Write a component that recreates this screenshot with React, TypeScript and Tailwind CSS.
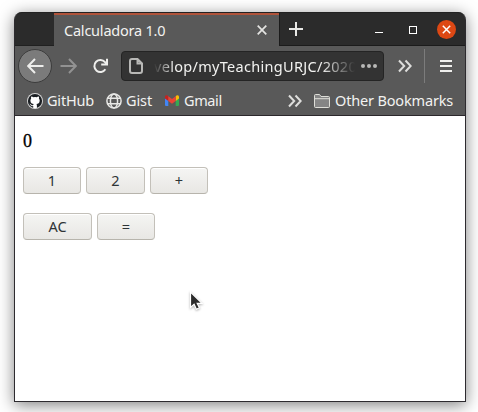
import type { ReactNode } from "react";

function Chevrons() {
  return (
    <svg width="14" height="14" viewBox="0 0 14 14" fill="none" stroke="#dededc" strokeWidth="2" className="shrink-0">
      <path d="M1 1.5 6.2 7 1 12.5M7.5 1.5 12.7 7 7.5 12.5" />
    </svg>
  );
}

function CalcButton({ children, className }: { children: ReactNode; className: string }) {
  return (
    <button
      className={
        "h-[27px] rounded-[4px] border border-[#c3c0b9] border-b-[#b7b4ac] bg-linear-to-b from-[#f5f5f3] to-[#e8e7e4] text-center text-[14.5px] leading-[25px] text-[#2e3436] shadow-[inset_0_1px_0_#fff] " +
        className
      }
    >
      {children}
    </button>
  );
}

function TabStrip() {
  return (
    <div className="flex h-[34px] rounded-t-[7px] border-t border-[#222] bg-[#2b2b2b]">
      <div className="w-[39px] border-b border-[#202020]" />
      <div className="flex w-[225px] items-center justify-between border-t-2 border-[#b0533a] bg-[#595959] pr-3 pl-[10px]">
        <span className="-mt-[2px] text-[14.5px] leading-5 tracking-[-0.22px] whitespace-nowrap">Calculadora 1.0</span>
        <svg width="10" height="10" viewBox="0 0 10 10" stroke="#e4e4e2" strokeWidth="1.7" className="-mt-[2px]">
          <path d="m.7.7 8.6 8.6m0-8.6L.7 9.3" />
        </svg>
      </div>
      <div className="flex flex-1 items-center border-b border-l border-[#1b1b1b] pr-[9px] pl-[9px]">
        <svg width="14" height="14" viewBox="0 0 14 14" stroke="#e8e8e6" strokeWidth="2">
          <path d="M7 0v14M0 7h14" />
        </svg>
        <div className="mt-[7px] ml-[72px] h-px w-2 bg-white" />
        <div className="mt-[2px] ml-[26px] h-2 w-2 border border-white" />
        <div className="ml-auto flex h-[19px] w-[19px] items-center justify-center rounded-full bg-[#dd4814]">
          <svg width="9" height="9" viewBox="0 0 9 9" stroke="#fff" strokeWidth="1.5">
            <path d="m.8.8 7.4 7.4m0-7.4L.8 8.2" />
          </svg>
        </div>
      </div>
    </div>
  );
}

function Toolbar() {
  return (
    <div className="flex h-10 items-center">
      <div className="ml-[3px] flex h-[34px] w-[34px] items-center justify-center rounded-full border border-[#3c3c3c] bg-[#7b7b7b]">
        <svg width="17" height="16" viewBox="0 0 17 16" fill="none" stroke="#eeeeec" strokeWidth="2">
          <path d="M16.5 8H2M8 1 1.2 8 8 15" />
        </svg>
      </div>
      <svg width="17" height="16" viewBox="0 0 17 16" fill="none" stroke="#929292" strokeWidth="2" className="ml-[8px]">
        <path d="M.5 8H15M9 1l6.8 7L9 15" />
      </svg>
      <svg width="16" height="16" viewBox="0 0 16 16" fill="none" stroke="#eeeeec" strokeWidth="2" className="ml-[15px]">
        <path d="M13.4 11.3A6 6 0 1 1 13 4.2L14.5 6" />
        <path d="M15 .7v5.8H9.2" />
      </svg>
      <div className="ml-[13px] flex h-[30px] w-[263px] items-center rounded-[4px] border border-[#242424] bg-[#333] pl-[7px]">
        <svg width="14" height="16" viewBox="0 0 14 16" fill="none" stroke="#b8b8b6" strokeWidth="2" className="shrink-0">
          <path d="M8.5 1H3a2 2 0 0 0-2 2v10a2 2 0 0 0 2 2h8a2 2 0 0 0 2-2V5.5L8.5 1v4.5H13" />
        </svg>
        <div className="ml-[11px] flex w-[201px] overflow-hidden mask-[linear-gradient(to_right,transparent,black_20px,black_168px,transparent_201px)]">
          <span className="text-[14.5px] leading-6 tracking-[0.3px] whitespace-nowrap">velop/myTeachingURJC/2020</span>
        </div>
        <div className="ml-[6px] flex gap-[2px]">
          <i className="h-1 w-1 rounded-full bg-[#b8b8b6]" />
          <i className="h-1 w-1 rounded-full bg-[#b8b8b6]" />
          <i className="h-1 w-1 rounded-full bg-[#b8b8b6]" />
        </div>
      </div>
      <div className="ml-[14px]">
        <Chevrons />
      </div>
      <div className="ml-3 h-[34px] w-px bg-[#7c7c7c]" />
      <svg width="12" height="12" viewBox="0 0 12 12" stroke="#eeeeec" strokeWidth="2" className="ml-[15px]">
        <path d="M0 1h12M0 6h12M0 11h12" />
      </svg>
    </div>
  );
}

function Bookmarks() {
  return (
    <div className="flex h-[30px] items-center border-b border-[#2b272b] pl-3 text-[14.5px] leading-5 whitespace-nowrap">
      <svg width="16" height="16" viewBox="0 0 16 16" className="shrink-0">
        <circle cx="8" cy="8" r="8" fill="#d8d8d8" />
        <circle cx="8" cy="8" r="7.1" fill="#1b1f23" />
        <path
          fill="#fff"
          d="M5.7 14.8c.4.1.5-.2.5-.4v-1.3c-2 .4-2.5-.9-2.5-.9-.3-.8-.8-1-.8-1-.7-.5 0-.5 0-.5.8.1 1.2.8 1.2.8.7 1.1 1.7.8 2.1.6 0-.5.3-.8.5-1-1.6-.2-3.3-.8-3.3-3.5 0-.8.3-1.5.8-2-.1-.2-.4-1 .1-2 0 0 .6-.2 2 .7a7 7 0 0 1 3.6 0c1.4-.9 2-.7 2-.7.4 1 .1 1.8 0 2 .5.5.8 1.2.8 2 0 2.7-1.7 3.3-3.3 3.5.3.2.5.7.5 1.3v2c0 .2.1.5.5.4A7.2 7.2 0 0 1 5.7 14.8Z"
        />
      </svg>
      <span className="-mt-[2px] ml-[4px] w-[47px] tracking-[-0.2px]">GitHub</span>
      <svg width="16" height="16" viewBox="0 0 16 16" fill="none" stroke="#e8e8e6" strokeWidth="1.5" className="ml-[12px] shrink-0">
        <circle cx="8" cy="8" r="7.1" />
        <ellipse cx="8" cy="8" rx="3.6" ry="7.1" />
        <path d="M1.6 5.2h12.8M1.6 10.8h12.8" />
      </svg>
      <span className="-mt-[2px] ml-[4px] w-[26px] tracking-[-0.1px]">Gist</span>
      <svg width="14" height="11" viewBox="0 0 14 11" className="ml-[13px] shrink-0">
        <path fill="#4285f4" d="M0 3v7q0 1 1 1h2.3V5z" />
        <path fill="#34a853" d="M10.7 5v6H13q1 0 1-1V3z" />
        <path fill="#c5221f" d="M0 1.5v2L3.3 6V1.2L2.5.5Q.8-.5 0 1.5" />
        <path fill="#fbbc04" d="M14 1.5v2L10.7 6V1.2l.8-.7Q13.2-.5 14 1.5" />
        <path fill="#ea4335" d="M3.3 1.2 7 4l3.7-2.8V6L7 8.8 3.3 6z" />
      </svg>
      <span className="-mt-[2px] ml-[5px] w-[38px] tracking-[-0.4px]">Gmail</span>
      <div className="ml-[66px]">
        <Chevrons />
      </div>
      <svg width="16" height="14" viewBox="0 0 16 14" fill="#858585" stroke="#deded8" className="ml-3 shrink-0">
        <path d="M.5 12.5V1.5q0-1 1-1h4l1.5 2h7.5q1 0 1 1v9q0 1-1 1h-13q-1 0-1-1ZM.5 4.7h15" />
      </svg>
      <span className="-mt-[2px] ml-[5px] tracking-[-0.16px]">Other Bookmarks</span>
    </div>
  );
}

export default function App() {
  return (
    <div className="relative h-[412px] w-[478px] overflow-hidden bg-white pt-3 pl-[14px] font-['Noto_Sans',sans-serif]">
      <div className="h-[390px] w-[452px] rounded-t-[8px] border border-t-0 border-[#2d2b2f] bg-white shadow-[0_3px_16px_rgba(0,0,0,0.5)]">
        <div className="rounded-t-[7px] bg-[#595959] text-[#f2f2f0]">
          <TabStrip />
          <Toolbar />
          <Bookmarks />
        </div>
        <main className="pl-2">
          <p className="pt-[15px] font-['Liberation_Serif',serif] text-[18px] leading-5 text-black [-webkit-text-stroke:0.3px_#000]">0</p>
          <div className="mt-4 flex gap-[5px]">
            <CalcButton className="w-[58px]">1</CalcButton>
            <CalcButton className="w-[59px]">2</CalcButton>
            <CalcButton className="w-[58px]">+</CalcButton>
          </div>
          <div className="mt-[19px] flex gap-[5px]">
            <CalcButton className="w-[69px]">AC</CalcButton>
            <CalcButton className="w-[58px]">=</CalcButton>
          </div>
        </main>
      </div>
      <svg width="14" height="20" viewBox="0 0 14 20" className="absolute top-[291px] left-[189px] drop-shadow-[0_1px_1px_rgba(0,0,0,0.3)]">
        <path d="M1.5 1v15.5l3.6-3.2 2.3 5 3-1.5-2.2-4.5H13z" fill="#2b2b2b" stroke="#fff" strokeWidth="1.2" />
      </svg>
    </div>
  );
}
